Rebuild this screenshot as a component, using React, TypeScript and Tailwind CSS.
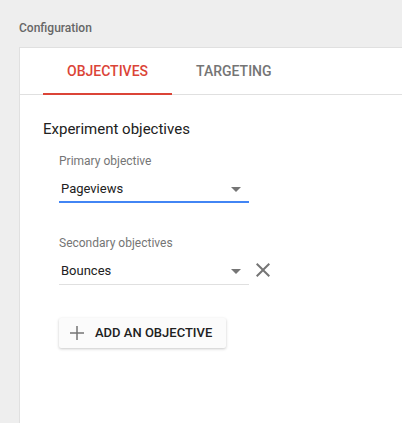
import { useState } from "react";

const tabs = ["Objectives", "Targeting"];

function ArrowDrop() {
  return (
    <svg width="10" height="5" viewBox="7 10 10 5" className="mr-[8px] shrink-0 fill-[#757575]">
      <path d="M7 10l5 5 5-5z" />
    </svg>
  );
}

function Select({ value, focused }: { value: string; focused?: boolean }) {
  return (
    <div
      className={
        focused
          ? "flex w-[190px] items-center border-b-2 border-[#4285f4] pb-[2px]"
          : "flex w-[190px] items-center border-b border-[#e0e0e0] pb-[3px]"
      }
    >
      <span className="flex-1 pl-[2px] text-[13px] leading-[20px] text-[#212121]">{value}</span>
      <ArrowDrop />
    </div>
  );
}

export default function App() {
  const [active, setActive] = useState(0);

  return (
    <div className="flex h-[423px] w-full flex-col overflow-hidden bg-[#eeeeee] pl-[19px] font-['Roboto',sans-serif]">
      <div className="mt-[20px] mb-[11px] text-[12px] leading-[16px] font-medium text-[#666666]">Configuration</div>

      <div className="flex-1 border-t border-l border-[#e0e0e0] bg-white">
        {/* Tabs */}
        <div className="flex border-b border-[#e0e0e0] pl-[23px]">
          {tabs.map((t, i) => (
            <button
              key={t}
              onClick={() => setActive(i)}
              className={
                i === active
                  ? "-mb-px flex h-[47px] items-center border-b-2 border-[#db4437] px-6 pt-[2px] text-[14px] font-medium text-[#db4437] uppercase"
                  : "-mb-px flex h-[47px] items-center border-b-2 border-transparent px-6 pt-[2px] text-[14px] font-medium text-[#757575] uppercase"
              }
            >
              {t}
            </button>
          ))}
        </div>

        <div className="pl-[23px]">
          <div className="mt-[24px] text-[15px] leading-[20px] text-[#212121]">Experiment objectives</div>

          <div className="pl-4">
            <div className="mt-[14px] text-[12px] leading-[16px] text-[#757575]">Primary objective</div>
            <div className="mt-[10px]">
              <Select value="Pageviews" focused />
            </div>

            <div className="mt-[32px] text-[12px] leading-[16px] text-[#757575]">Secondary objectives</div>
            <div className="mt-[10px] flex items-start">
              <Select value="Bounces" />
              <button className="mt-[2px] ml-[7px]">
                <svg width="14" height="14" viewBox="5 5 14 14" className="fill-[#757575]">
                  <path d="M19 6.41L17.59 5 12 10.59 6.41 5 5 6.41 10.59 12 5 17.59 6.41 19 12 13.41 17.59 19 19 17.59 13.41 12z" />
                </svg>
              </button>
            </div>

            <button className="mt-[33px] flex h-[30px] items-center rounded-[2px] bg-[#fbfbfb] pr-[14px] pl-[11px] shadow-[0_1px_3px_rgba(0,0,0,0.22)]">
              <svg width="14" height="14" viewBox="5 5 14 14" className="fill-[#757575]">
                <path d="M19 12.75h-6.25V19h-1.5v-6.25H5v-1.5h6.25V5h1.5v6.25H19z" />
              </svg>
              <span className="ml-[11px] text-[13px] leading-[16px] font-medium text-[#212121] uppercase">
                Add an objective
              </span>
            </button>
          </div>
        </div>
      </div>
    </div>
  );
}
